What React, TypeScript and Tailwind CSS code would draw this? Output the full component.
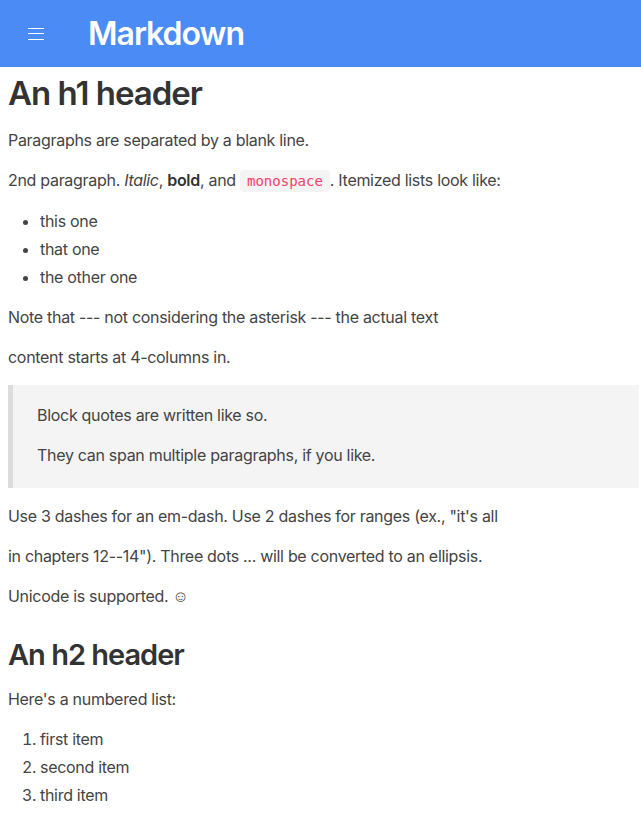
import React from 'react';

const body = "font-['Inter','Noto_Sans',sans-serif]";

export default function App() {
    return (
        <div className={`${body} min-h-[814px] bg-white text-[16px] tracking-[-0.3px] text-[#444]`}>
            <header className="flex h-[67px] items-center bg-[#4b8bf5] text-white">
                <button className="ml-[28px] flex w-4 flex-col gap-[4.5px] py-1" aria-label="Menu">
                    <span className="block h-px w-4 bg-white" />
                    <span className="block h-px w-4 bg-white" />
                    <span className="block h-px w-4 bg-white" />
                </button>
                <h1 className="ml-[44px] text-[32px] font-semibold leading-none tracking-[-1px]">Markdown</h1>
            </header>

            <main className="pl-2 pr-[2px]">
                <h1 className="mb-[14px] mt-[7px] text-[33px] font-semibold leading-[1.2] tracking-[-1px] text-[#333]">
                    An h1 header
                </h1>

                <p className="mb-4 leading-6">Paragraphs are separated by a blank line.</p>
                <p className="mb-4 leading-6">
                    2nd paragraph. <em>Italic</em>, <strong className="font-semibold text-[#333]">bold</strong>, and{' '}
                    <code className="rounded-sm bg-[#f4f4f4] px-[7px] py-[3px] font-['DejaVu_Sans_Mono',monospace] text-[14px] tracking-normal text-[#f2416b]">
                        monospace
                    </code>
                    . Itemized lists look like:
                </p>

                <ul className="mb-4 list-disc pl-8 leading-6 [&>li+li]:mt-1">
                    <li>this one</li>
                    <li>that one</li>
                    <li>the other one</li>
                </ul>

                <p className="mb-4 leading-6">Note that --- not considering the asterisk --- the actual text</p>
                <p className="mb-4 leading-6">content starts at 4-columns in.</p>

                <blockquote className="mb-4 border-l-[5px] border-[#dcdcdc] bg-[#f4f4f4] pb-[21px] pl-6 pt-[18px]">
                    <p className="mb-4 leading-6">Block quotes are written like so.</p>
                    <p className="leading-6">They can span multiple paragraphs, if you like.</p>
                </blockquote>

                <p className="mb-4 leading-6">Use 3 dashes for an em-dash. Use 2 dashes for ranges (ex., "it's all</p>
                <p className="mb-4 leading-6">in chapters 12--14"). Three dots ... will be converted to an ellipsis.</p>
                <p className="leading-6">Unicode is supported. ☺</p>

                <h2 className="mb-[15px] mt-[30px] text-[29px] font-semibold leading-[1.2] tracking-[-1px] text-[#333]">
                    An h2 header
                </h2>

                <p className="mb-4 leading-6">Here's a numbered list:</p>

                <ol className="list-decimal pl-8 leading-6 [&>li+li]:mt-1">
                    <li>first item</li>
                    <li>second item</li>
                    <li>third item</li>
                </ol>
            </main>
        </div>
    );
}
